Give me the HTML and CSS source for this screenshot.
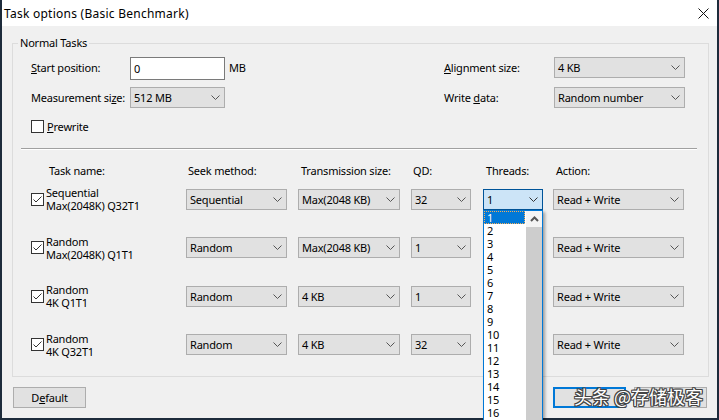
FILE: index.html
```html
<!DOCTYPE html>
<html lang="en">
<head>
<meta charset="utf-8">
<title>Task options (Basic Benchmark)</title>
<link rel="stylesheet" href="styles.css">
</head>
<body>
<div class="window">
  <header class="titlebar">
    <span class="title">Task options (Basic Benchmark)</span>
    <svg class="close" width="11" height="11" viewBox="0 0 11 11"><path d="M0.5 0.5L10.5 10.5M10.5 0.5L0.5 10.5" stroke="#111" stroke-width="1" fill="none"/></svg>
  </header>
  <main class="content">
    <fieldset class="group">
      <legend>Normal Tasks</legend>
      <div class="settings">
        <span class="lbl"><u>S</u>tart position:</span>
        <div class="input">0</div>
        <span class="lbl unit">MB</span>
        <span class="lbl"><u>A</u>lignment size:</span>
        <div class="sel"><span>4 KB</span><svg class="chev" width="9" height="5" viewBox="0 0 9 5"><polyline points="0.5,0.5 4.5,4.5 8.5,0.5" fill="none" stroke="#555" stroke-width="1"/></svg></div>

        <span class="lbl">Measurement si<u>z</u>e:</span>
        <div class="sel"><span>512 MB</span><svg class="chev" width="9" height="5" viewBox="0 0 9 5"><polyline points="0.5,0.5 4.5,4.5 8.5,0.5" fill="none" stroke="#555" stroke-width="1"/></svg></div>
        <span></span>
        <span class="lbl">Write <u>d</u>ata:</span>
        <div class="sel"><span>Random number</span><svg class="chev" width="9" height="5" viewBox="0 0 9 5"><polyline points="0.5,0.5 4.5,4.5 8.5,0.5" fill="none" stroke="#555" stroke-width="1"/></svg></div>
      </div>

      <div class="prewrite"><span class="cb"></span><span><u>P</u>rewrite</span></div>

      <hr class="sep">

      <div class="thead">
        <span class="h h-name">Task name:</span>
        <span class="h">Seek method:</span>
        <span class="h h3">Transmission size:</span>
        <span class="h">QD:</span>
        <span class="h h4">Threads:</span>
        <span class="h h3">Action:</span>
      </div>

      <div class="tbody">
        <div class="trow">
          <div class="task"><span class="cb"><svg width="11" height="11" viewBox="0 0 11 11"><polyline points="1.5,5.5 4,8 9.5,2.5" fill="none" stroke="#333" stroke-width="1"/></svg></span><span class="tname">Sequential<br>Max(2048K) Q32T1</span></div>
          <div class="sel"><span>Sequential</span><svg class="chev" width="9" height="5" viewBox="0 0 9 5"><polyline points="0.5,0.5 4.5,4.5 8.5,0.5" fill="none" stroke="#555" stroke-width="1"/></svg></div>
          <div class="sel"><span>Max(2048 KB)</span><svg class="chev" width="9" height="5" viewBox="0 0 9 5"><polyline points="0.5,0.5 4.5,4.5 8.5,0.5" fill="none" stroke="#555" stroke-width="1"/></svg></div>
          <div class="sel"><span>32</span><svg class="chev" width="9" height="5" viewBox="0 0 9 5"><polyline points="0.5,0.5 4.5,4.5 8.5,0.5" fill="none" stroke="#555" stroke-width="1"/></svg></div>
          <div class="sel threads focus"><span>1</span><svg class="chev" width="9" height="5" viewBox="0 0 9 5"><polyline points="0.5,0.5 4.5,4.5 8.5,0.5" fill="none" stroke="#333" stroke-width="1"/></svg></div>
          <div class="sel"><span>Read + Write</span><svg class="chev" width="9" height="5" viewBox="0 0 9 5"><polyline points="0.5,0.5 4.5,4.5 8.5,0.5" fill="none" stroke="#555" stroke-width="1"/></svg></div>
        </div>
        <div class="trow">
          <div class="task"><span class="cb"><svg width="11" height="11" viewBox="0 0 11 11"><polyline points="1.5,5.5 4,8 9.5,2.5" fill="none" stroke="#333" stroke-width="1"/></svg></span><span class="tname">Random<br>Max(2048K) Q1T1</span></div>
          <div class="sel"><span>Random</span><svg class="chev" width="9" height="5" viewBox="0 0 9 5"><polyline points="0.5,0.5 4.5,4.5 8.5,0.5" fill="none" stroke="#555" stroke-width="1"/></svg></div>
          <div class="sel"><span>Max(2048 KB)</span><svg class="chev" width="9" height="5" viewBox="0 0 9 5"><polyline points="0.5,0.5 4.5,4.5 8.5,0.5" fill="none" stroke="#555" stroke-width="1"/></svg></div>
          <div class="sel"><span>1</span><svg class="chev" width="9" height="5" viewBox="0 0 9 5"><polyline points="0.5,0.5 4.5,4.5 8.5,0.5" fill="none" stroke="#555" stroke-width="1"/></svg></div>
          <div class="sel threads"></div>
          <div class="sel"><span>Read + Write</span><svg class="chev" width="9" height="5" viewBox="0 0 9 5"><polyline points="0.5,0.5 4.5,4.5 8.5,0.5" fill="none" stroke="#555" stroke-width="1"/></svg></div>
        </div>
        <div class="trow">
          <div class="task"><span class="cb"><svg width="11" height="11" viewBox="0 0 11 11"><polyline points="1.5,5.5 4,8 9.5,2.5" fill="none" stroke="#333" stroke-width="1"/></svg></span><span class="tname">Random<br>4K Q1T1</span></div>
          <div class="sel"><span>Random</span><svg class="chev" width="9" height="5" viewBox="0 0 9 5"><polyline points="0.5,0.5 4.5,4.5 8.5,0.5" fill="none" stroke="#555" stroke-width="1"/></svg></div>
          <div class="sel"><span>4 KB</span><svg class="chev" width="9" height="5" viewBox="0 0 9 5"><polyline points="0.5,0.5 4.5,4.5 8.5,0.5" fill="none" stroke="#555" stroke-width="1"/></svg></div>
          <div class="sel"><span>1</span><svg class="chev" width="9" height="5" viewBox="0 0 9 5"><polyline points="0.5,0.5 4.5,4.5 8.5,0.5" fill="none" stroke="#555" stroke-width="1"/></svg></div>
          <div class="sel threads"></div>
          <div class="sel"><span>Read + Write</span><svg class="chev" width="9" height="5" viewBox="0 0 9 5"><polyline points="0.5,0.5 4.5,4.5 8.5,0.5" fill="none" stroke="#555" stroke-width="1"/></svg></div>
        </div>
        <div class="trow">
          <div class="task"><span class="cb"><svg width="11" height="11" viewBox="0 0 11 11"><polyline points="1.5,5.5 4,8 9.5,2.5" fill="none" stroke="#333" stroke-width="1"/></svg></span><span class="tname">Random<br>4K Q32T1</span></div>
          <div class="sel"><span>Random</span><svg class="chev" width="9" height="5" viewBox="0 0 9 5"><polyline points="0.5,0.5 4.5,4.5 8.5,0.5" fill="none" stroke="#555" stroke-width="1"/></svg></div>
          <div class="sel"><span>4 KB</span><svg class="chev" width="9" height="5" viewBox="0 0 9 5"><polyline points="0.5,0.5 4.5,4.5 8.5,0.5" fill="none" stroke="#555" stroke-width="1"/></svg></div>
          <div class="sel"><span>32</span><svg class="chev" width="9" height="5" viewBox="0 0 9 5"><polyline points="0.5,0.5 4.5,4.5 8.5,0.5" fill="none" stroke="#555" stroke-width="1"/></svg></div>
          <div class="sel threads"></div>
          <div class="sel"><span>Read + Write</span><svg class="chev" width="9" height="5" viewBox="0 0 9 5"><polyline points="0.5,0.5 4.5,4.5 8.5,0.5" fill="none" stroke="#555" stroke-width="1"/></svg></div>
        </div>
      </div>
    </fieldset>

    <div class="buttons">
      <button class="btn default">D<u>e</u>fault</button>
      <div class="btn-pair">
        <button class="btn primary"></button>
        <button class="btn"></button>
      </div>
    </div>
  </main>
</div>

<div class="dropdown">
  <div class="options">
    <div class="opt active">1</div>
    <div class="opt">2</div>
    <div class="opt">3</div>
    <div class="opt">4</div>
    <div class="opt">5</div>
    <div class="opt">6</div>
    <div class="opt">7</div>
    <div class="opt">8</div>
    <div class="opt">9</div>
    <div class="opt">10</div>
    <div class="opt">11</div>
    <div class="opt">12</div>
    <div class="opt">13</div>
    <div class="opt">14</div>
    <div class="opt">15</div>
    <div class="opt">16</div>
  </div>
  <div class="scroll">
    <div class="up"><svg width="9" height="6" viewBox="0 0 9 6"><polyline points="1,5 4.5,1.5 8,5" fill="none" stroke="#555" stroke-width="2"/></svg></div>
    <div class="thumb"></div>
  </div>
</div>

<div class="watermark">头条 @存储极客</div>
</body>
</html>
```

FILE: styles.css
```css
html, body {
  margin: 0;
  padding: 0;
}

body {
  position: relative;
  width: 719px;
  height: 420px;
  overflow: hidden;
  background: #f0f0f0;
  font-family: "Noto Sans", "Segoe UI", sans-serif;
  font-size: 11px;
  letter-spacing: -0.2px;
  color: #000;
}

.window {
  width: 719px;
  height: 420px;
  box-sizing: border-box;
  border: 2px solid #1d2b3b;
  border-top: 0;
  background: #f0f0f0;
  display: flex;
  flex-direction: column;
  overflow: hidden;
}

.titlebar {
  height: 26px;
  flex: none;
  background: #fff;
  display: flex;
  align-items: center;
  justify-content: space-between;
  padding: 0 8px 0 2px;
}

.title {
  font-size: 12px;
  letter-spacing: 0.25px;
  line-height: 16px;
  padding-top: 1px;
}

.close {
  display: block;
}

.content {
  flex: 1;
  padding: 9px 8px 0 10px;
  display: flex;
  flex-direction: column;
}

.group {
  margin: 0;
  padding: 6px 0 18px 0;
  border: 1px solid #dcdcdc;
  min-inline-size: 0;
}

.group legend {
  margin-left: 5px;
  padding: 0 2px;
  line-height: 16px;
}

.settings {
  display: grid;
  grid-template-columns: 99px 95px 1fr 110px 131px;
  grid-template-rows: 23px 21px;
  row-gap: 7px;
  align-items: start;
  margin: 0 23px 0 18px;
}

.lbl {
  line-height: 21px;
  white-space: nowrap;
}

.unit {
  padding-left: 4px;
}

.input {
  box-sizing: border-box;
  height: 23px;
  border: 1px solid #7a7a7a;
  background: #fff;
  padding: 0 3px;
  line-height: 21px;
}

.sel {
  box-sizing: border-box;
  height: 21px;
  border: 1px solid #adadad;
  background: #e1e1e1;
  display: flex;
  align-items: center;
  justify-content: space-between;
  padding: 0 4px 0 3px;
  line-height: 19px;
  white-space: nowrap;
  overflow: hidden;
}

.sel.focus {
  background: #cce4f7;
  border-color: #005499;
}

.chev {
  display: block;
  flex: none;
}

.cb {
  box-sizing: border-box;
  width: 13px;
  height: 13px;
  border: 1px solid #333;
  background: #fff;
  flex: none;
  display: block;
}

.cb svg {
  display: block;
}

.prewrite {
  display: flex;
  align-items: center;
  gap: 3px;
  height: 13px;
  margin: 12px 0 0 18px;
  line-height: 13px;
}

.sep {
  margin: 15px 11px 0 8px;
  height: 0;
  border: 0;
  border-top: 1px solid #a0a0a0;
  border-bottom: 1px solid #fff;
}

.thead,
.trow {
  display: grid;
  grid-template-columns: 144px 101px 102px 60px 60px 131px;
  column-gap: 11px;
  margin-left: 18px;
}

.thead {
  margin-top: 13px;
  line-height: 16px;
  white-space: nowrap;
}

.h {
  padding-left: 2px;
}

.h-name {
  padding-left: 18px;
}

.h3 {
  padding-left: 3px;
}

.h4 {
  padding-left: 4px;
}

.tbody {
  margin-top: 7px;
  display: flex;
  flex-direction: column;
  gap: 22.67px;
}

.trow {
  height: 26px;
  align-items: center;
}

.threads {
  width: 60px;
  margin-left: 1px;
}

.task {
  display: flex;
  align-items: center;
  gap: 2px;
}

.tname {
  line-height: 13px;
  white-space: nowrap;
}

.buttons {
  display: flex;
  justify-content: space-between;
  margin: 10px 2px 0 1px;
}

.btn-pair {
  display: flex;
  gap: 8px;
}

.btn {
  box-sizing: border-box;
  width: 73px;
  height: 21px;
  margin: 0;
  padding: 0;
  border: 1px solid #adadad;
  background: #e1e1e1;
  font: inherit;
  letter-spacing: inherit;
  color: #000;
  line-height: 19px;
}

.btn.primary {
  border: 2px solid #0078d7;
}

.dropdown {
  position: absolute;
  left: 483px;
  top: 210px;
  width: 60px;
  height: 210px;
  box-sizing: border-box;
  border: 1px solid #0078d7;
  border-bottom: 0;
  background: #fff;
  display: flex;
  box-shadow: 2px 2px 3px rgba(0, 0, 0, 0.35);
}

.options {
  flex: 1;
  min-width: 0;
}

.opt {
  height: 13px;
  line-height: 13px;
  padding-left: 3px;
}

.opt.active {
  background: #0078d7;
  color: #fff;
  outline: 1px dotted #f5b05a;
  outline-offset: -1px;
  margin-right: 1px;
}

.scroll {
  width: 16px;
  flex: none;
  display: flex;
  flex-direction: column;
}

.scroll .up {
  height: 16px;
  background: #f4f4f4;
  display: flex;
  align-items: center;
  justify-content: center;
}

.scroll .up svg {
  display: block;
}

.scroll .thumb {
  flex: 1;
  background: #cdcdcd;
}

.watermark {
  position: absolute;
  left: 574px;
  top: 384px;
  font-family: "Noto Sans CJK SC", "Noto Sans", sans-serif;
  font-size: 18px;
  letter-spacing: 0;
  line-height: 24px;
  color: #fff;
  white-space: nowrap;
  text-shadow: 1px 0 0 #444, -1px 0 0 #444, 0 1px 0 #444, 0 -1px 0 #444, 1px 1px 0 #444, -1px -1px 0 #444, 1px -1px 0 #444, -1px 1px 0 #444;
}
```
